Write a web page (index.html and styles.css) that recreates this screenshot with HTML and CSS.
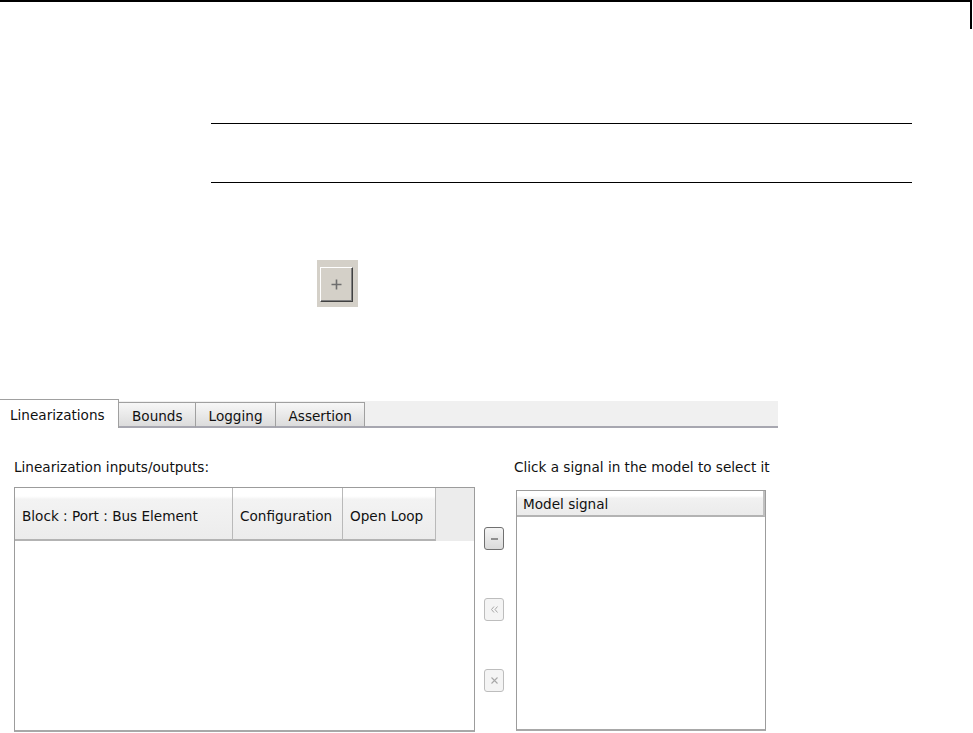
FILE: index.html
```html
<!DOCTYPE html>
<html lang="en">
<head>
    <meta charset="UTF-8">
    <title>Linearizations</title>
    <link rel="stylesheet" href="styles.css">
</head>
<body>
    <div class="page-edge"></div>

    <div class="rules"></div>

    <div class="tool-row">
        <div class="plus-box">
            <div class="plus-btn">
                <svg width="11" height="11" viewBox="0 0 11 11">
                    <path d="M5.5 0.5v10M0.5 5.5h10" stroke="#6e6e6e" stroke-width="1.6" fill="none"/>
                </svg>
            </div>
        </div>
    </div>

    <div class="panel">
        <div class="tabs">
            <div class="tab active">Linearizations</div>
            <div class="tab">Bounds</div>
            <div class="tab">Logging</div>
            <div class="tab">Assertion</div>
            <div class="tab-fill"></div>
        </div>

        <div class="panel-body">
            <div class="left-col">
                <div class="label">Linearization inputs/outputs:</div>
                <div class="table">
                    <div class="table-head">
                        <div class="th th-block">Block : Port : Bus Element</div>
                        <div class="th th-config">Configuration</div>
                        <div class="th th-loop">Open Loop</div>
                        <div class="th-fill"></div>
                    </div>
                </div>
            </div>

            <div class="btn-col">
                <div class="sbtn">
                    <svg width="9" height="9" viewBox="0 0 9 9"><path d="M1 5h7" stroke="#555" stroke-width="1.2"/></svg>
                </div>
                <div class="sbtn disabled">
                    <svg width="9" height="9" viewBox="0 0 9 9"><path d="M4 1.5L1.5 4.5L4 7.5M7.5 1.5L5 4.5L7.5 7.5" stroke="#a8a8a8" stroke-width="1" fill="none"/></svg>
                </div>
                <div class="sbtn disabled">
                    <svg width="9" height="9" viewBox="0 0 9 9"><path d="M1.5 1.5l6 6M7.5 1.5l-6 6" stroke="#a8a8a8" stroke-width="1.1" fill="none"/></svg>
                </div>
            </div>

            <div class="right-col">
                <div class="label">Click a signal in the model to select it</div>
                <div class="signal-box">
                    <div class="signal-head">Model signal</div>
                </div>
            </div>
        </div>
    </div>
</body>
</html>
```

FILE: styles.css
```css
body {
    margin: 0;
    background: #fff;
    color: #111;
    font-family: "DejaVu Sans", Tahoma, sans-serif;
    font-size: 13.6px;
}

.page-edge {
    width: 972px;
    height: 29px;
    box-sizing: border-box;
    border-top: 2px solid #000;
    border-right: 2px solid #000;
}

.rules {
    width: 701px;
    height: 58px;
    margin: 94px 0 0 211px;
    border-top: 1px solid #000;
    border-bottom: 1px solid #000;
}

.tool-row {
    margin-top: 77px;
    padding-left: 317px;
}

.plus-box {
    width: 41px;
    height: 47px;
    box-sizing: border-box;
    padding: 7px 3px 0 3px;
    background: #d4d0c8;
}

.plus-btn {
    width: 33px;
    height: 35px;
    box-sizing: border-box;
    display: flex;
    align-items: center;
    justify-content: center;
    background: #d4d0c8;
    border-top: 1px solid #fff;
    border-left: 1px solid #fff;
    border-right: 1px solid #404040;
    border-bottom: 1px solid #404040;
    box-shadow: inset -1px -1px #808080;
}

.panel {
    width: 778px;
    margin-top: 92px;
}

/* tab strip */
.tabs {
    display: flex;
    align-items: flex-end;
    height: 29px;
    background: linear-gradient(to bottom, #fff 2px, #f0f0f0 2px);
}

.tab {
    height: 26px;
    box-sizing: border-box;
    padding: 0 12px 0 13px;
    line-height: 27px;
    border: 1px solid #a0a0a0;
    border-left: none;
    border-bottom: 2px solid #a7a7b0;
    background: linear-gradient(to bottom, #f7f7f7, #dcdcdc);
}

.tab.active {
    height: 29px;
    width: 119px;
    padding: 0 0 0 10px;
    line-height: 31px;
    background: #fff;
    border-bottom: none;
}

.tab-fill {
    flex: 1;
    border-bottom: 2px solid #a7a7b0;
}

/* panel contents */
.panel-body {
    display: flex;
    padding: 31px 0 0 14px;
}

.label {
    height: 16px;
    line-height: 16px;
    white-space: nowrap;
}

.left-col {
    width: 461px;
}

.table {
    margin-top: 12px;
    height: 245px;
    box-sizing: border-box;
    border: 1px solid #9c9c9c;
    border-bottom: 2px solid #a8a8a8;
}

.table-head {
    display: flex;
    height: 53px;
}

.th {
    box-sizing: border-box;
    padding-left: 7px;
    line-height: 56px;
    white-space: nowrap;
    border-right: 1px solid #b9b9b9;
    border-bottom: 2px solid #b3b3b3;
    background: linear-gradient(to bottom, #fff 0, #fff 16%, #f3f3f3 22%, #ececec 100%);
}

.th-block { width: 218px; }
.th-config { width: 110px; }
.th-loop { width: 93px; }

.th-fill {
    flex: 1;
    background: #ececec;
}

.btn-col {
    display: flex;
    flex-direction: column;
    gap: 48px;
    margin: 68px 0 0 9px;
}

.sbtn {
    width: 20px;
    height: 23px;
    box-sizing: border-box;
    display: flex;
    align-items: center;
    justify-content: center;
    border: 1px solid #707070;
    border-radius: 3px;
    background: linear-gradient(to bottom, #f4f4f4, #dadada);
}

.sbtn.disabled {
    border-color: #bdbdbd;
    background: #f4f4f4;
}

.right-col {
    margin-left: 10px;
}

.signal-box {
    width: 250px;
    height: 241px;
    box-sizing: border-box;
    margin: 15px 0 0 2px;
    border: 1px solid #9c9c9c;
    border-bottom: 2px solid #a8a8a8;
}

.signal-head {
    height: 26px;
    box-sizing: border-box;
    padding-left: 6px;
    line-height: 27px;
    border-bottom: 2px solid #b3b3b3;
    border-right: 2px solid #c0c0c0;
    background: linear-gradient(to bottom, #fff 0, #fff 20%, #f1f1f1 30%, #ebebeb 100%);
}
```
